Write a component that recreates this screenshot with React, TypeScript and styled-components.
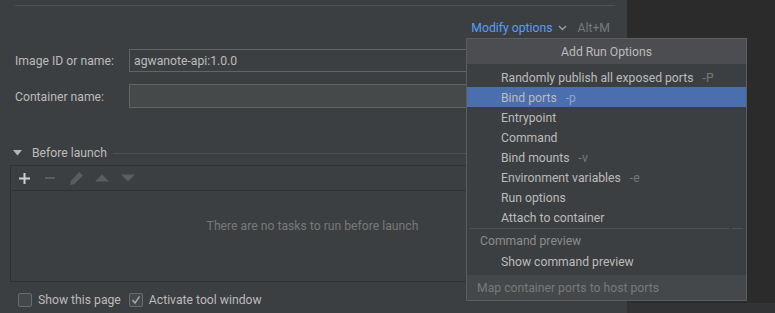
import React from "react";
import styled, { createGlobalStyle } from "styled-components";

const Global = createGlobalStyle`
  html, body { margin: 0; padding: 0; background: #2b2b2b; }
  body { font-family: "Roboto", "Noto Sans", sans-serif; font-size: 12.2px; color: #bbbbbb; }
  * { box-sizing: border-box; }
`;

const Screen = styled.div`
  position: relative;
  display: flex;
  width: 775px;
  height: 313px;
  overflow: hidden;
`;

const Panel = styled.div`
  width: 627px;
  height: 313px;
  background: #3c3f41;
  display: flex;
  flex-direction: column;
`;

const Side = styled.div`
  flex: 1;
  display: flex;
  flex-direction: column;
  background: #2b2b2b;
`;

const SideStrip = styled.div`
  margin-top: auto;
  height: 10px;
  background: #313335;
`;

const TopRule = styled.div`
  margin: 5px 12px 0 15px;
  height: 1px;
  background: #4f5254;
`;

const ModifyRow = styled.div`
  display: flex;
  justify-content: flex-end;
  align-items: center;
  height: 20px;
  margin-top: 12px;
  padding-right: 17px;
  gap: 5px;
`;

const LinkText = styled.span`
  color: #589df6;
`;

const Shortcut = styled.span`
  color: #787878;
  margin-left: 6px;
`;

const FormRow = styled.div<{ $top: number }>`
  display: flex;
  align-items: center;
  margin-top: ${(p) => p.$top}px;
  padding-left: 15px;
`;

const Label = styled.label`
  width: 114px;
  flex: none;
  padding-top: 1px;
`;

const Input = styled.div<{ $filled?: boolean; $h: number }>`
  width: 486px;
  height: ${(p) => p.$h}px;
  border: 1px solid #646464;
  background: ${(p) => (p.$filled ? "#3c3f41" : "#45494a")};
  padding: 1px 4px 0;
  display: flex;
  align-items: center;
  color: #bbbbbb;
`;

const SectionHead = styled.div`
  display: flex;
  align-items: center;
  margin-top: 35px;
  padding-left: 13px;
  height: 20px;
`;

const SectionTitle = styled.span`
  margin-left: 10px;
`;

const SectionLine = styled.div`
  flex: 1;
  height: 1px;
  background: #4f5254;
  margin-left: 6px;
`;

const TaskBox = styled.div`
  margin: 2px 12px 0 10px;
  height: 117px;
  border: 1px solid #2f3133;
  display: flex;
  flex-direction: column;
`;

const Toolbar = styled.div`
  height: 25px;
  border-bottom: 1px solid #2f3133;
  display: flex;
  align-items: center;
  padding-left: 5px;
  gap: 10px;
`;

const ToolIcon = styled.span`
  width: 16px;
  height: 16px;
  display: flex;
  align-items: center;
  justify-content: center;
`;

const EmptyText = styled.div`
  flex: 1;
  display: flex;
  align-items: center;
  justify-content: center;
  color: #787878;
  padding-bottom: 21px;
`;

const CheckRow = styled.div`
  display: flex;
  align-items: center;
  margin-top: 10px;
  padding-left: 18px;
  height: 16px;
`;

const CheckBox = styled.span`
  width: 14px;
  height: 14px;
  border: 1px solid #6b6b6b;
  background: #43494a;
  border-radius: 2px;
  display: flex;
  align-items: center;
  justify-content: center;
  flex: none;
`;

const CheckLabel = styled.span`
  margin-left: 6px;
  margin-right: 8px;
`;

const Popup = styled.div`
  position: absolute;
  left: 466px;
  top: 38px;
  width: 281px;
  border: 1px solid #5b5e61;
  background: #3c3f41;
  display: flex;
  flex-direction: column;
`;

const PopupHeader = styled.div`
  height: 25px;
  padding-top: 1px;
  background: #4b4d50;
  display: flex;
  align-items: center;
  justify-content: center;
  color: #bbbbbb;
`;

const ItemList = styled.div`
  padding-top: 3px;
  display: flex;
  flex-direction: column;
`;

const Item = styled.div<{ $active?: boolean }>`
  height: 20px;
  padding-top: 1px;
  display: flex;
  align-items: center;
  padding-left: 34px;
  background: ${(p) => (p.$active ? "#4b6eaf" : "transparent")};
  color: #bbbbbb;
`;

const Hint = styled.span<{ $active?: boolean }>`
  margin-left: 9px;
  color: ${(p) => (p.$active ? "#8ea5cf" : "#787878")};
`;

const Separator = styled.div`
  display: flex;
  gap: 3px;
  margin: 1px 3px 0 3px;
  height: 1px;
`;

const SepMain = styled.div`
  flex: 1;
  background: #4f5254;
`;

const SepTail = styled.div`
  width: 11px;
  background: #4f5254;
`;

const GroupHead = styled.div`
  height: 21px;
  padding-left: 13px;
  padding-top: 1px;
  display: flex;
  align-items: center;
  margin-top: 1px;
  color: #8c8c8c;
`;

const PopupFooter = styled.div`
  margin-top: 4px;
  height: 25px;
  background: #45484a;
  display: flex;
  align-items: center;
  padding-left: 10px;
  color: #787878;
`;

const Chevron = () => (
  <svg width="9" height="6" viewBox="0 0 9 6">
    <path d="M1 1 L4.5 4.5 L8 1" stroke="#9a9da0" strokeWidth="1.4" fill="none" />
  </svg>
);

const items: { label: string; hint?: string; active?: boolean }[] = [
  { label: "Randomly publish all exposed ports", hint: "-P" },
  { label: "Bind ports", hint: "-p", active: true },
  { label: "Entrypoint" },
  { label: "Command" },
  { label: "Bind mounts", hint: "-v" },
  { label: "Environment variables", hint: "-e" },
  { label: "Run options" },
  { label: "Attach to container" },
];

export default function App() {
  return (
    <>
      <Global />
      <Screen>
        <Panel>
          <TopRule />
          <ModifyRow>
            <LinkText>Modify options</LinkText>
            <Chevron />
            <Shortcut>Alt+M</Shortcut>
          </ModifyRow>
          <FormRow $top={11}>
            <Label>Image ID or name:</Label>
            <Input $filled $h={23}>agwanote-api:1.0.0</Input>
          </FormRow>
          <FormRow $top={12}>
            <Label>Container name:</Label>
            <Input $h={24} />
          </FormRow>
          <SectionHead>
            <svg width="9" height="6" viewBox="0 0 9 6">
              <path d="M0 0 L9 0 L4.5 5.5 Z" fill="#b4b4b4" />
            </svg>
            <SectionTitle>Before launch</SectionTitle>
            <SectionLine />
          </SectionHead>
          <TaskBox>
            <Toolbar>
              <ToolIcon>
                <svg width="13" height="13" viewBox="0 0 13 13">
                  <path d="M6.5 1 V12 M1 6.5 H12" stroke="#d0d0d0" strokeWidth="2" />
                </svg>
              </ToolIcon>
              <ToolIcon>
                <svg width="12" height="12" viewBox="0 0 12 12">
                  <path d="M1 6 H11" stroke="#5a5d5f" strokeWidth="2" />
                </svg>
              </ToolIcon>
              <ToolIcon>
                <svg width="15" height="15" viewBox="0 0 15 15">
                  <path d="M10.5 1 L14 4.5 L5.5 13 L1 14 L2 9.5 Z" fill="#5a5d5f" />
                </svg>
              </ToolIcon>
              <ToolIcon>
                <svg width="14" height="8" viewBox="0 0 14 8">
                  <path d="M0 7.5 L7 0.5 L14 7.5 Z" fill="#5a5d5f" />
                </svg>
              </ToolIcon>
              <ToolIcon>
                <svg width="14" height="8" viewBox="0 0 14 8">
                  <path d="M0 0.5 L14 0.5 L7 7.5 Z" fill="#5a5d5f" />
                </svg>
              </ToolIcon>
            </Toolbar>
            <EmptyText>There are no tasks to run before launch</EmptyText>
          </TaskBox>
          <CheckRow>
            <CheckBox />
            <CheckLabel>Show this page</CheckLabel>
            <CheckBox>
              <svg width="10" height="10" viewBox="0 0 10 10">
                <path d="M1.5 5 L4 8 L8.5 1.5" stroke="#a8a8a8" strokeWidth="1.4" fill="none" />
              </svg>
            </CheckBox>
            <CheckLabel>Activate tool window</CheckLabel>
          </CheckRow>
        </Panel>
        <Side>
          <SideStrip />
        </Side>
        <Popup>
          <PopupHeader>Add Run Options</PopupHeader>
          <ItemList>
            {items.map((it) => (
              <Item key={it.label} $active={it.active}>
                {it.label}
                {it.hint && <Hint $active={it.active}>{it.hint}</Hint>}
              </Item>
            ))}
          </ItemList>
          <Separator>
            <SepMain />
            <SepTail />
          </Separator>
          <GroupHead>Command preview</GroupHead>
          <Item>Show command preview</Item>
          <PopupFooter>Map container ports to host ports</PopupFooter>
        </Popup>
      </Screen>
    </>
  );
}
